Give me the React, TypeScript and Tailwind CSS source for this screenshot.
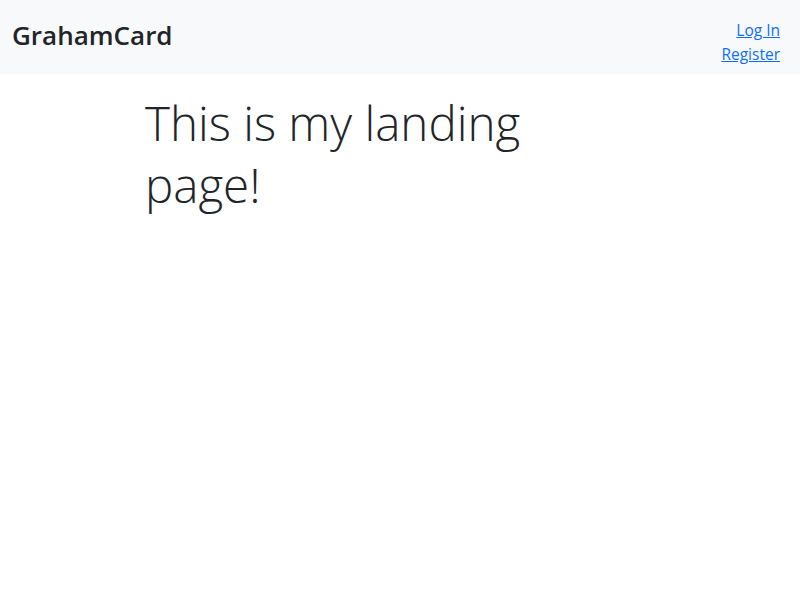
export default function App() {
  return (
    <div className="min-h-[600px] bg-white text-[#212529]" style={{ fontFamily: '"Open Sans", "Noto Sans", sans-serif' }}>
      <nav className="flex h-[74px] items-center justify-between bg-[#f8f9fa] pl-[12px] pr-[20px]">
        <div className="pb-[4px] text-[26px] font-semibold leading-none text-[#212529]">GrahamCard</div>
        <div className="mt-[10px] flex flex-col items-end text-[15.5px] leading-[24px]">
          <a href="#" className="text-[#0d6efd] underline">Log In</a>
          <a href="#" className="text-[#0d6efd] underline">Register</a>
        </div>
      </nav>
      <main className="pl-[145px] pt-[18px]">
        <h1 className="w-[430px] text-[47.5px] font-light leading-[62px]">This is my landing page!</h1>
      </main>
    </div>
  );
}
